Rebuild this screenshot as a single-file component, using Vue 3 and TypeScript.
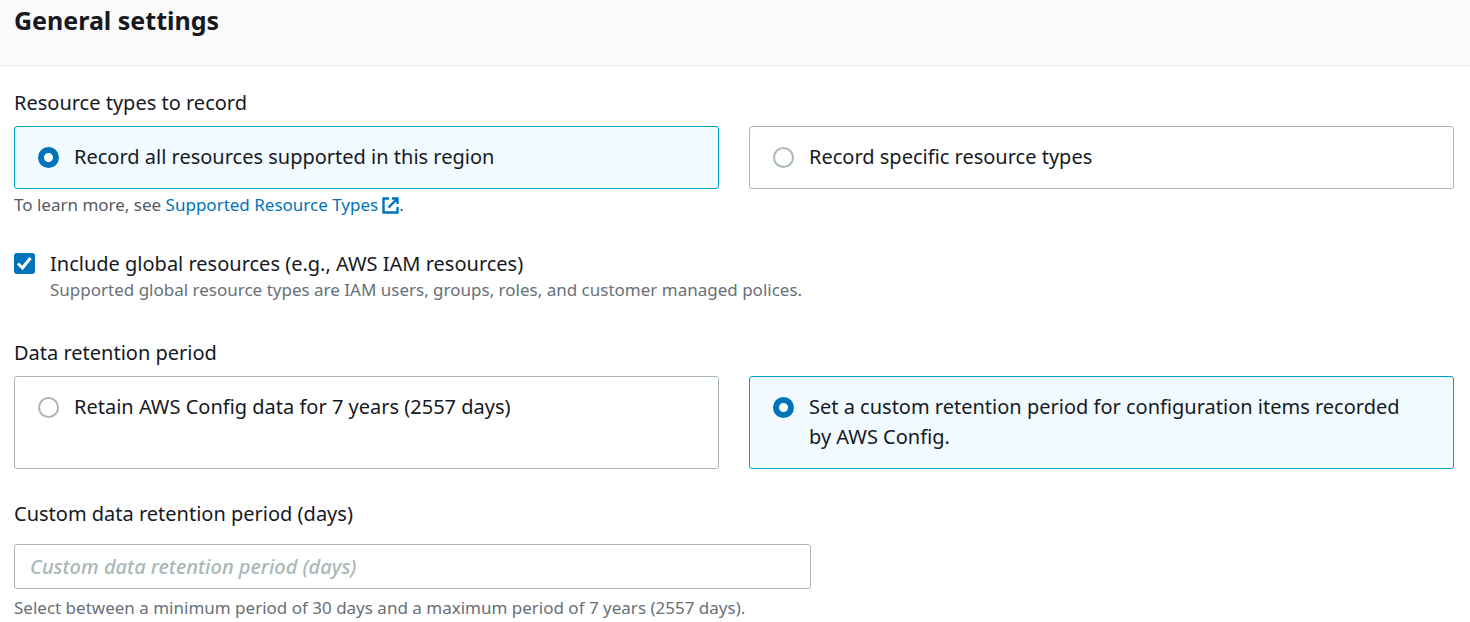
<script setup lang="ts">
import { ref } from 'vue'

type RecordScope = 'all' | 'specific'
type Retention = 'default' | 'custom'

interface Option<T> {
  value: T
  label: string
}

const scopeOptions: Option<RecordScope>[] = [
  { value: 'all', label: 'Record all resources supported in this region' },
  { value: 'specific', label: 'Record specific resource types' },
]

const retentionOptions: Option<Retention>[] = [
  { value: 'default', label: 'Retain AWS Config data for 7 years (2557 days)' },
  { value: 'custom', label: 'Set a custom retention period for configuration items recorded by AWS Config.' },
]

const scope = ref<RecordScope>('all')
const retention = ref<Retention>('custom')
const includeGlobal = ref(true)
const days = ref('')
</script>

<template>
  <section class="panel">
    <header class="panel-header">
      <h2>General settings</h2>
    </header>

    <form class="panel-body" @submit.prevent>
      <fieldset class="field">
        <legend class="label">Resource types to record</legend>
        <div class="tiles">
          <label
            v-for="o in scopeOptions"
            :key="o.value"
            class="tile"
            :class="{ selected: scope === o.value }"
          >
            <input v-model="scope" class="radio" type="radio" name="scope" :value="o.value" />
            <span>{{ o.label }}</span>
          </label>
        </div>
        <p class="hint">
          To learn more, see
          <a href="#">Supported Resource Types<svg
            class="external"
            viewBox="0 0 17 17"
            aria-hidden="true"
          ><path d="M7 1.500H1.500v14h14V10M10 1.500h5.500V7M15.500 1.500 6.500 10.500" /></svg></a>.
        </p>
      </fieldset>

      <div class="check-row">
        <input id="global" v-model="includeGlobal" class="checkbox" type="checkbox" aria-describedby="global-hint" />
        <div>
          <label for="global" class="check-label">Include global resources (e.g., AWS IAM resources)</label>
          <p id="global-hint" class="hint muted">
            Supported global resource types are IAM users, groups, roles, and customer managed polices.
          </p>
        </div>
      </div>

      <fieldset class="field">
        <legend class="label">Data retention period</legend>
        <div class="tiles">
          <label
            v-for="o in retentionOptions"
            :key="o.value"
            class="tile"
            :class="{ selected: retention === o.value }"
          >
            <input v-model="retention" class="radio" type="radio" name="retention" :value="o.value" />
            <span>{{ o.label }}</span>
          </label>
        </div>
      </fieldset>

      <div class="custom">
        <label class="label" for="days">Custom data retention period (days)</label>
        <input
          id="days"
          v-model="days"
          class="text-input"
          type="text"
          placeholder="Custom data retention period (days)"
          aria-describedby="days-hint"
        />
        <p id="days-hint" class="hint muted">
          Select between a minimum period of 30 days and a maximum period of 7 years (2557 days).
        </p>
      </div>
    </form>
  </section>
</template>

<style>
body {
  background: #fff;
}
</style>

<style scoped>
.panel {
  font-family: "Noto Sans", "Open Sans", sans-serif;
  font-size: 20px;
  line-height: 30px;
  color: #16191f;
}

.panel-header {
  padding: 5px 14px 30px;
  background: #fafafa;
  border-bottom: 1px solid #eaeded;
}

h2 {
  margin: 0;
  font-size: 25px;
  line-height: 30px;
  font-weight: 700;
}

.panel-body {
  padding: 22px 16px 0 14px;
}

.field {
  min-width: 0;
  margin: 0;
  padding: 0;
  border: 0;
}

.label {
  display: block;
  padding: 0;
}

.tiles {
  display: grid;
  grid-template-columns: 1fr 1fr;
  gap: 30px;
  padding-top: 8px;
}

.tile {
  display: flex;
  align-items: flex-start;
  gap: 15px;
  padding: 15px 36px 16px 23px;
  border: 1px solid #aab7b8;
  border-radius: 3px;
  background: #fff;
}

.tile.selected {
  border-color: #00a1c9;
  background: #f1faff;
}

.radio,
.checkbox {
  appearance: none;
  flex: none;
  box-sizing: border-box;
  width: 21px;
  height: 21px;
  margin: 5px 0 0;
  border: 2px solid #aab7b8;
  background: #fff;
}

.radio {
  border-radius: 50%;
}

.radio:checked {
  border: 6px solid #0073bb;
}

.checkbox {
  margin-top: 4px;
  border-radius: 3px;
}

.checkbox:checked {
  border: 0;
  background: #0073bb url("data:image/svg+xml,%3Csvg xmlns='http://www.w3.org/2000/svg' viewBox='0 0 21 21'%3E%3Cpath d='M4 10.500 8.500 15 16.500 5' fill='none' stroke='white' stroke-width='3'/%3E%3C/svg%3E") center / 100%;
}

.hint {
  margin: 0;
  padding-top: 4px;
  font-size: 17px;
  line-height: 24px;
  color: #545b64;
}

.muted {
  color: #687078;
}

.hint a {
  color: #0073bb;
  text-decoration: none;
}

.external {
  width: 17px;
  height: 17px;
  margin-left: 4px;
  vertical-align: -3px;
  fill: none;
  stroke: currentColor;
  stroke-width: 2.4;
}

.check-row {
  display: flex;
  gap: 15px;
  padding: 32px 0 37px;
}

.check-row .hint {
  padding-top: 0;
  line-height: 22px;
}

.check-label {
  display: block;
}

.custom {
  padding-top: 30px;
}

.text-input {
  display: block;
  box-sizing: border-box;
  width: 55.35%;
  height: 45px;
  margin: 15px 0 3px;
  padding: 0 15px;
  border: 1px solid #aab7b8;
  border-radius: 3px;
  background: #fff;
  color: #16191f;
  font: inherit;
}

.text-input::placeholder {
  color: #aab7b8;
  font-style: italic;
  font-weight: 500;
  opacity: 1;
}
</style>
